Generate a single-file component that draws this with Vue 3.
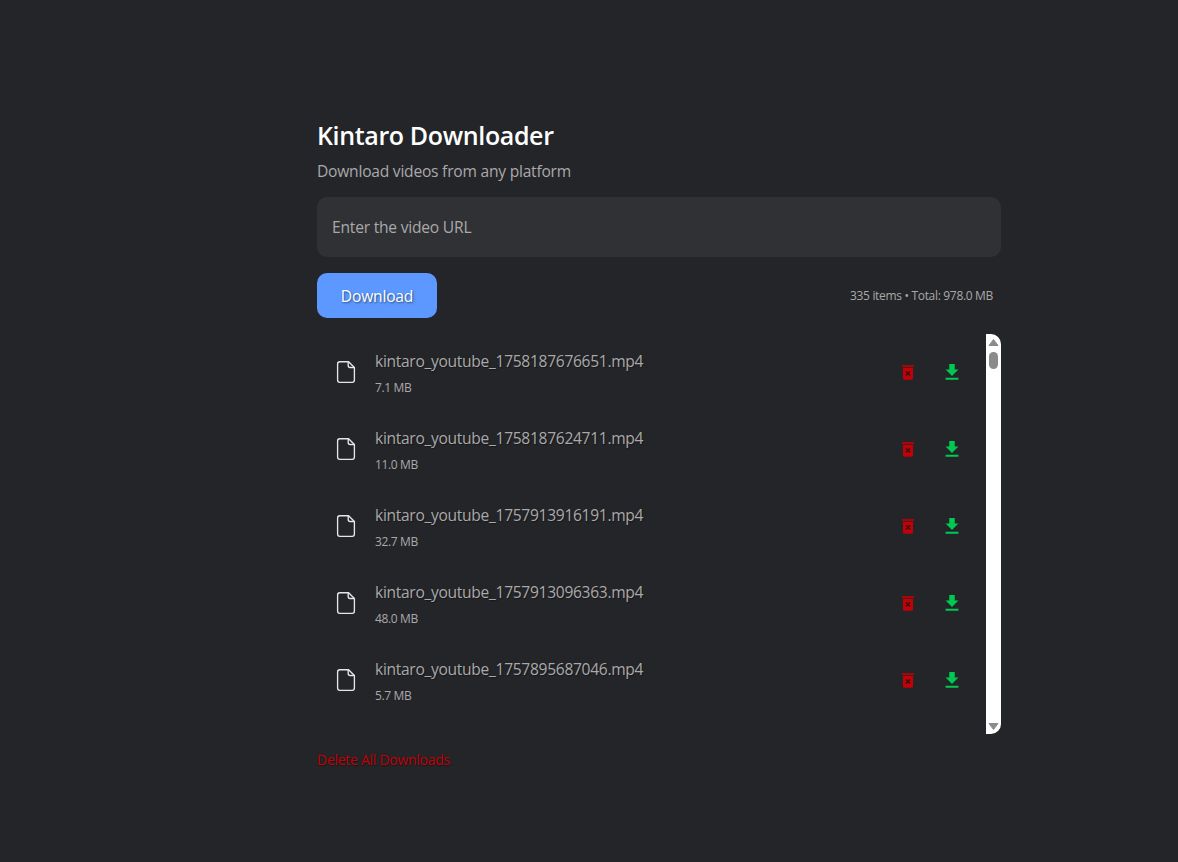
<script setup>
const files = [
  { name: 'kintaro_youtube_1758187676651.mp4', size: '7.1 MB' },
  { name: 'kintaro_youtube_1758187624711.mp4', size: '11.0 MB' },
  { name: 'kintaro_youtube_1757913916191.mp4', size: '32.7 MB' },
  { name: 'kintaro_youtube_1757913096363.mp4', size: '48.0 MB' },
  { name: 'kintaro_youtube_1757895687046.mp4', size: '5.7 MB' },
]
</script>

<template>
  <main class="page">
    <h1 class="title">Kintaro Downloader</h1>
    <p class="subtitle">Download videos from any platform</p>
    <input class="url" type="text" placeholder="Enter the video URL" />
    <div class="toolbar">
      <button class="download">Download</button>
      <span class="summary">335 items • Total: 978.0 MB</span>
    </div>
    <section class="list">
      <ul class="rows">
        <li v-for="file in files" :key="file.name" class="row">
          <svg class="file-icon" width="20" height="24" viewBox="0 0 20 24" fill="none" stroke="#e6e6e6" stroke-width="1.35" stroke-linejoin="round">
            <path d="M12.6 1.7H3.8Q1.6 1.7 1.6 3.9V20.1Q1.6 22.3 3.8 22.3H16.2Q18.4 22.3 18.4 20.1V7.5Z" />
            <path d="M12.2 1.7V5.6Q12.2 7.5 14.1 7.5H18.2" />
          </svg>
          <div class="info">
            <span class="name">{{ file.name }}</span>
            <span class="size">{{ file.size }}</span>
          </div>
          <button class="action" aria-label="Delete">
            <svg width="14" height="18" viewBox="0 -0.6 14 18">
              <path fill="#a80505" d="M1 1.4H13V3.4H1Z" />
              <path fill="#c10007" d="M2 4.2H12V14.6Q12 16.2 10.4 16.2H3.6Q2 16.2 2 14.6Z" />
              <path d="M4.8 7.6L9.2 11.9M9.2 7.6L4.8 11.9" stroke="#35100f" stroke-width="1.3" />
            </svg>
          </button>
          <button class="action" aria-label="Save">
            <svg width="22" height="22" viewBox="0 -0.4 24 24" fill="#00c951">
              <path d="M5 20H19V18H5ZM19 9H15V3H9V9H5L12 16Z" />
            </svg>
          </button>
        </li>
      </ul>
      <div class="scrollbar">
        <svg width="11" height="7" viewBox="0 0 11 7"><path d="M5.5 .5L10 6.5H1Z" fill="#8b8b8b" stroke="#8b8b8b" stroke-linejoin="round" /></svg>
        <div class="thumb"></div>
        <svg class="down" width="11" height="7" viewBox="0 0 11 7"><path d="M5.5 6.5L10 .5H1Z" fill="#8b8b8b" stroke="#8b8b8b" stroke-linejoin="round" /></svg>
      </div>
    </section>
    <button class="clear">Delete All Downloads</button>
  </main>
</template>

<style>
body {
  margin: 0;
  background: #242529;
  overflow: hidden;
}
</style>

<style scoped>
.page {
  box-sizing: border-box;
  width: 684px;
  height: 862px;
  margin-left: 317px;
  padding-top: 117px;
  font-family: "Segoe UI", "Open Sans", "Noto Sans", sans-serif;
  color: #a9a9a9;
}
.title {
  margin: 0;
  height: 36px;
  font-size: 25px;
  line-height: 36px;
  font-weight: 600;
  letter-spacing: -0.36px;
  color: #fff;
  white-space: nowrap;
}
.subtitle {
  margin: 6px 0 0;
  height: 24px;
  font-size: 15.6px;
  line-height: 24px;
  letter-spacing: -0.23px;
  white-space: nowrap;
}
button {
  border: 0;
  padding: 0;
  background: none;
  font-family: inherit;
}
.url {
  display: block;
  box-sizing: border-box;
  width: 684px;
  height: 60px;
  margin-top: 14px;
  padding: 0 15px;
  border: 0;
  border-radius: 10px;
  background: #303135;
  font-family: inherit;
  font-size: 15.6px;
  letter-spacing: -0.22px;
  color: #a9a9a9;
}
.url::placeholder {
  color: #a9a9a9;
  opacity: 1;
}
.toolbar {
  display: flex;
  align-items: center;
  justify-content: space-between;
  margin-top: 16px;
  padding-right: 8px;
  height: 45px;
}
.download {
  width: 120px;
  height: 45px;
  border-radius: 10px;
  background: #5c98ff;
  color: #fff;
  font-size: 15.6px;
  letter-spacing: -0.2px;
  text-shadow: 1px 1px 2px rgba(0, 0, 0, 0.5);
}
.summary {
  font-size: 12px;
  letter-spacing: -0.32px;
  white-space: nowrap;
}
.list {
  display: flex;
  height: 400px;
  margin-top: 16px;
  border-radius: 10px;
  overflow: hidden;
}
.rows {
  flex: 1;
  margin: 0;
  padding: 0;
  list-style: none;
}
.row {
  display: flex;
  align-items: center;
  box-sizing: border-box;
  height: 77px;
  padding: 0 12px 0 19px;
}
.file-icon {
  flex: none;
  margin-bottom: 1px;
}
.info {
  display: flex;
  flex: 1;
  flex-direction: column;
  margin-left: 19px;
  padding-top: 3px;
}
.name {
  height: 26px;
  font-size: 15.6px;
  line-height: 24px;
  letter-spacing: -0.31px;
  white-space: nowrap;
  text-shadow: 1px 1px 1px rgba(0, 0, 0, 0.35);
}
.size {
  height: 24px;
  font-size: 12px;
  line-height: 26px;
  letter-spacing: -0.35px;
}
.action {
  display: flex;
  align-items: center;
  justify-content: center;
  width: 44px;
  height: 44px;
  margin-bottom: 1px;
}
.scrollbar {
  display: flex;
  flex-direction: column;
  align-items: center;
  box-sizing: border-box;
  width: 15px;
  padding: 5px 0 4px;
  background: #fff;
}
.thumb {
  width: 9px;
  height: 17px;
  margin-top: 6px;
  border-radius: 5px;
  background: #8b8b8b;
}
.down {
  margin-top: auto;
}
.clear {
  display: block;
  height: 24px;
  margin-top: 14px;
  font-size: 14px;
  line-height: 24px;
  letter-spacing: -0.28px;
  color: #c10007;
  white-space: nowrap;
  text-shadow: 1px 1px 1px rgba(0, 0, 0, 0.4);
}
</style>
